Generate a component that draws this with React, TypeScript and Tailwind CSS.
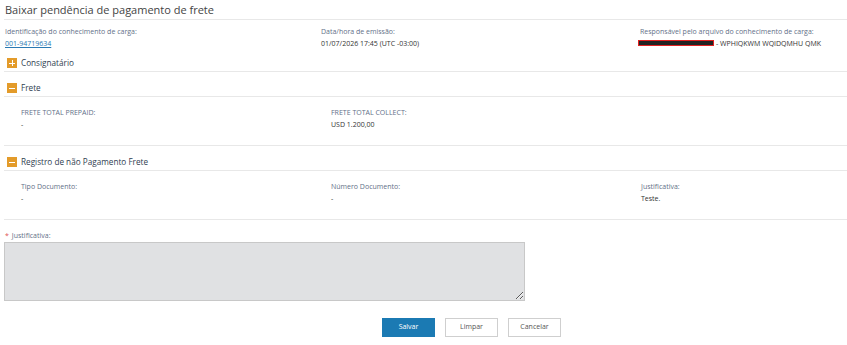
import React from "react";

function Toggle({ open }: { open: boolean }) {
  return (
    <span className="w-[10px] h-[10px] bg-[#e39b2a] flex items-center justify-center shrink-0">
      <span className="relative w-[6px] h-[1px] bg-white">
        {!open && <span className="absolute left-[2.5px] top-[-2.5px] w-[1px] h-[6px] bg-white" />}
      </span>
    </span>
  );
}

function SectionHeader({ title, open }: { title: string; open: boolean }) {
  return (
    <div className="ml-[4px] h-[17px] border-b border-[#e8e8e8] flex items-start">
      <div className="h-[16px] flex items-center gap-[4px] pl-[3px]">
        <Toggle open={open} />
        <span className="text-[8.2px] text-[#2f3e50] leading-none">{title}</span>
      </div>
    </div>
  );
}

function Field({ label, value }: { label: string; value: string }) {
  return (
    <div className="flex flex-col">
      <div className="h-[12px] flex items-center text-[7px] text-[#5f7088] leading-none">{label}</div>
      <div className="h-[12px] flex items-center text-[7px] text-[#333] leading-none">{value}</div>
    </div>
  );
}

export default function App() {
  return (
    <div className="w-[847px] h-[345px] bg-white font-['Open_Sans',sans-serif] overflow-hidden">
      <div className="ml-[4px] h-[20px] border-b border-[#e8e8e8] flex items-center">
        <span className="pl-[1px] text-[11px] text-[#444] leading-none pb-[1px]">
          Baixar pendência de pagamento de frete
        </span>
      </div>

      <div className="mt-[5px] grid grid-cols-[316px_319px_1fr] pl-[5px]">
        <div className="flex flex-col">
          <div className="h-[12px] flex items-center text-[7px] text-[#5f7088] leading-none">
            Identificação do conhecimento de carga:
          </div>
          <div className="h-[12px] flex items-center text-[7px] text-[#2a79b3] leading-none underline">
            001-94719634
          </div>
        </div>
        <div className="flex flex-col">
          <div className="h-[12px] flex items-center text-[7px] text-[#5f7088] leading-none">
            Data/hora de emissão:
          </div>
          <div className="h-[12px] flex items-center text-[7px] text-[#333] leading-none">
            01/07/2026 17:45 (UTC -03:00)
          </div>
        </div>
        <div className="flex flex-col">
          <div className="h-[12px] flex items-center text-[7px] text-[#5f7088] leading-none">
            Responsável pelo arquivo do conhecimento de carga:
          </div>
          <div className="h-[12px] flex items-center text-[7px] text-[#333] leading-none -ml-[2px]">
            <span className="w-[76px] h-[6px] bg-[#222] border border-[#e02020] mr-[2px]" />
            - WPHIQKWM WQIDQMHU QMK
          </div>
        </div>
      </div>

      <div className="mt-[6px]">
        <SectionHeader title="Consignatário" open={false} />
      </div>

      <div className="mt-[8px]">
        <SectionHeader title="Frete" open={true} />
        <div className="ml-[4px] h-[49px] border-b border-[#e8e8e8] pt-[9px] pl-[17px] grid grid-cols-[310px_310px_1fr]">
          <Field label="FRETE TOTAL PREPAID:" value="-" />
          <Field label="FRETE TOTAL COLLECT:" value="USD 1.200,00" />
          <div />
        </div>
      </div>

      <div className="mt-[8px]">
        <SectionHeader title="Registro de não Pagamento Frete" open={true} />
        <div className="ml-[4px] h-[49px] border-b border-[#e8e8e8] pt-[9px] pl-[17px] grid grid-cols-[310px_310px_1fr]">
          <Field label="Tipo Documento:" value="-" />
          <Field label="Número Documento:" value="-" />
          <Field label="Justificativa:" value="Teste." />
        </div>
      </div>

      <div className="mt-[9px] pl-[5px] h-[12px] flex items-center text-[7px] leading-none">
        <span className="text-[#e05050] mr-[3px]">*</span>
        <span className="text-[#5f7088]">Justificativa:</span>
      </div>
      <div className="mt-[1px] ml-[4px]">
        <textarea className="block w-[521px] h-[59px] bg-[#e0e1e3] border border-[#c8c8c8] outline-none resize" />
      </div>

      <div className="mt-[17px] ml-[382px] flex gap-[10px]">
        <button className="w-[53px] h-[19px] bg-[#1b7ab3] text-white text-[7px] border border-[#1b7ab3]">
          Salvar
        </button>
        <button className="w-[53px] h-[19px] bg-white text-[#555] text-[7px] border border-[#cfcfcf]">
          Limpar
        </button>
        <button className="w-[53px] h-[19px] bg-white text-[#555] text-[7px] border border-[#cfcfcf]">
          Cancelar
        </button>
      </div>
    </div>
  );
}
